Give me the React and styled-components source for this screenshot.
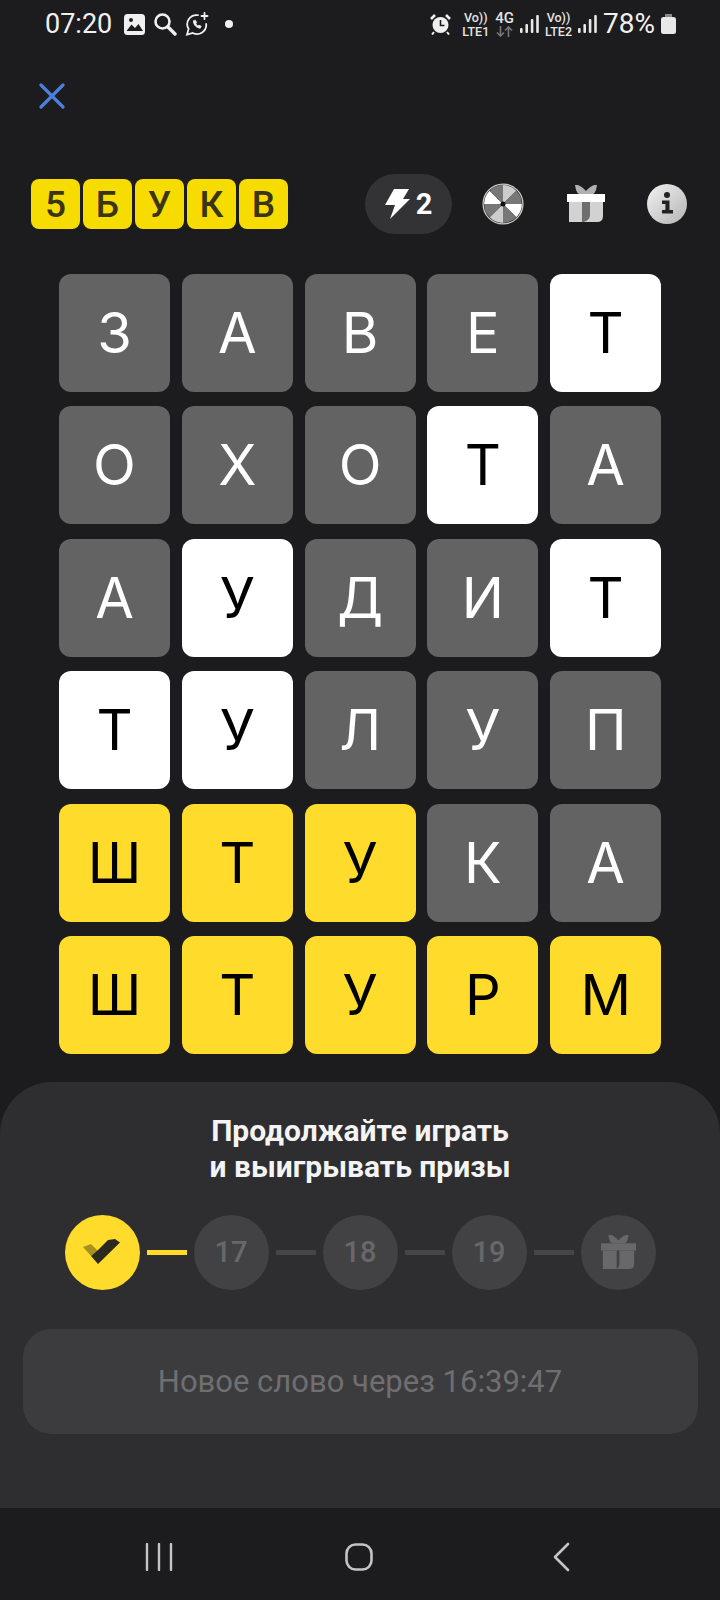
import React from 'react';
import styled, {createGlobalStyle} from 'styled-components';

const GlobalStyle = createGlobalStyle`
html, body {
margin: 0;
padding: 0;
background: #1c1c1e;
}
`;

const Page = styled.div`
width: 720px;
height: 1600px;
display: flex;
flex-direction: column;
overflow: hidden;
background: #1c1c1e;
font-family: Roboto, "Noto Sans", sans-serif;
color: #fff;
`;

const StatusBar = styled.div`
height: 48px;
padding: 0 44px 0 45px;
box-sizing: border-box;
display: flex;
align-items: center;
justify-content: space-between;
color: #f0f0f0;
`;

const StatusGroup = styled.div`
display: flex;
align-items: center;
gap: ${({gap}) => gap || 6}px;
`;

const StatusText = styled.span`
font-size: ${({size}) => size || 27}px;
line-height: 30px;
margin-right: ${({after}) => after || 0}px;
`;

const StatusDot = styled.span`
width: 8px;
height: 8px;
border-radius: 50%;
background: #f0f0f0;
margin-left: 8px;
`;

const NetLabel = styled.div`
display: flex;
flex-direction: column;
align-items: center;
font-size: 12.5px;
line-height: 13px;
font-weight: 500;
color: #e4e4e4;
`;

const NetTop = styled.span`
font-size: ${({size}) => size || 12.5}px;
line-height: 14px;
`;

const Arrows = styled.svg`
margin-top: 1px;
`;

const CloseRow = styled.div`
height: 92px;
padding: 35px 0 0 39px;
box-sizing: border-box;
`;

const Header = styled.div`
height: 60px;
margin-top: 34px;
padding: 0 33px 0 31px;
display: flex;
align-items: center;
justify-content: space-between;
`;

const Logo = styled.div`
display: flex;
gap: 3px;
`;

const LogoTile = styled.div`
width: 49px;
height: 50px;
border-radius: 8px;
background: #f6dc00;
color: #3a3418;
font-size: 37px;
font-weight: 500;
display: flex;
align-items: center;
justify-content: center;
`;

const Actions = styled.div`
display: flex;
align-items: center;
`;

const EnergyPill = styled.div`
width: 87px;
height: 60px;
border-radius: 30px;
background: #333335;
display: flex;
align-items: center;
justify-content: center;
gap: 6px;
font-size: 29px;
font-weight: 700;
margin-right: 30px;
`;

const ActionGap = styled.span`
width: ${({size}) => size}px;
`;

const Grid = styled.div`
margin: 40px 0 0 59px;
display: grid;
grid-template-columns: repeat(5, 111px);
grid-auto-rows: 118px;
column-gap: 11.8px;
row-gap: 14.4px;
`;

const tileColors = {
    gray: ['#636363', '#fff'],
    white: ['#fff', '#000'],
    yellow: ['#ffdc2b', '#000'],
};

const Tile = styled.div`
border-radius: 12px;
display: flex;
align-items: center;
justify-content: center;
font-family: Inter, Roboto, sans-serif;
font-size: 56px;
font-weight: 400;
background: ${({kind}) => tileColors[kind][0]};
color: ${({kind}) => tileColors[kind][1]};
`;

const Sheet = styled.div`
margin-top: 28px;
flex: 1;
border-radius: 52px 52px 0 0;
background: #2e2e30;
padding-top: 31px;
display: flex;
flex-direction: column;
align-items: center;
`;

const SheetTitle = styled.div`
font-size: 30px;
line-height: 36px;
font-weight: 700;
text-align: center;
color: #f4f4f4;
`;

const Stepper = styled.div`
margin-top: 30px;
display: flex;
align-items: center;
gap: 4px;
`;

const Step = styled.div`
width: 75px;
height: 75px;
border-radius: 50%;
background: ${({done}) => (done ? '#ffdc2b' : '#424244')};
color: #68686a;
font-size: 29px;
font-weight: 500;
display: flex;
align-items: center;
justify-content: center;
`;

const Connector = styled.div`
width: 40px;
height: 5px;
margin: 0 3px;
background: ${({done}) => (done ? '#ffdc2b' : '#454547')};
`;

const Timer = styled.div`
margin-top: 39px;
width: 675px;
height: 105px;
border-radius: 28px;
background: #3c3c3e;
color: #6f6f71;
font-size: 31px;
display: flex;
align-items: center;
justify-content: center;
`;

const NavBar = styled.div`
height: 92px;
padding: 6px 150px 0 145px;
box-sizing: border-box;
background: #1c1c1e;
display: flex;
align-items: center;
justify-content: space-between;
`;

const HomeButton = styled.svg`
margin-right: 8px;
`;

const AlarmIcon = styled.svg`
margin-right: 5px;
`;

const words = [
    ['З', 'gray'], ['А', 'gray'], ['В', 'gray'], ['Е', 'gray'], ['Т', 'white'],
    ['О', 'gray'], ['Х', 'gray'], ['О', 'gray'], ['Т', 'white'], ['А', 'gray'],
    ['А', 'gray'], ['У', 'white'], ['Д', 'gray'], ['И', 'gray'], ['Т', 'white'],
    ['Т', 'white'], ['У', 'white'], ['Л', 'gray'], ['У', 'gray'], ['П', 'gray'],
    ['Ш', 'yellow'], ['Т', 'yellow'], ['У', 'yellow'], ['К', 'gray'], ['А', 'gray'],
    ['Ш', 'yellow'], ['Т', 'yellow'], ['У', 'yellow'], ['Р', 'yellow'], ['М', 'yellow'],
];

const Signal = () => (
    <svg width="19" height="20" viewBox="0 0 19 20" fill="#e8e8e8">
        <rect x="0" y="14" width="2.6" height="5" rx="1"/>
        <rect x="5.4" y="10" width="2.6" height="9" rx="1"/>
        <rect x="10.8" y="5" width="2.6" height="14" rx="1"/>
        <rect x="16.2" y="1" width="2.6" height="18" rx="1"/>
    </svg>
);

const Wheel = () => {
    const colors = ['#ccc', '#777', '#fff', '#777', '#ccc', '#777', '#fff', '#777'];
    const point = (deg) => {
        const rad = (deg - 90) * Math.PI / 180;
        return `${20 + 18 * Math.cos(rad)} ${20 + 18 * Math.sin(rad)}`;
    };
    return (
        <svg width="42" height="42" viewBox="0 0 40 40">
            {colors.map((color, index) => (
                <path key={index} fill={color}
                      d={`M20 20L${point(index * 45)}A18 18 0 0 1 ${point(index * 45 + 45)}Z`}/>
            ))}
            <circle cx="20" cy="20" r="19" fill="none" stroke="#ccc" strokeWidth="1.2"/>
            <circle cx="20" cy="20" r="2.4" fill="#111"/>
        </svg>
    );
};

const Gift = ({body = '#d2d2d2', top = '#fff', bow = '#b0b0b0', stripe = '#6e6e6e', narrow, size = 38}) => (
    <svg width={size} height={size} viewBox="0 0 38 38">
        <path fill={bow} d="M8 0q5-1 11 6q6-7 11-6l-1 5q-1 3-3 4H12q-2-1-3-4z"/>
        <rect x="0" y="9" width="38" height="8" fill={top}/>
        <path fill={body} d="M2 17h34v14q0 6-6 6H2z"/>
        {narrow
            ? <path fill={stripe} d="M17 17h3v14q-1 5-3 6z"/>
            : <path fill={stripe} d="M15 17h8v14q-1 5-7 6h-1z"/>}
    </svg>
);

const App = () => (
    <Page>
        <GlobalStyle/>
        <StatusBar>
            <StatusGroup gap={8}>
                <StatusText after={4}>07:20</StatusText>
                <svg width="21" height="21" viewBox="0 0 21 21">
                    <rect width="21" height="21" rx="3.5" fill="#f0f0f0"/>
                    <path d="M2.5 17l5-6.5 3.5 3.5 3.5-4 4.5 7z" fill="#1c1c1e"/>
                    <circle cx="7" cy="6" r="2" fill="#1c1c1e"/>
                </svg>
                <svg width="24" height="24" viewBox="0 0 24 24" fill="none" stroke="#f0f0f0" strokeLinecap="round">
                    <circle cx="9.5" cy="9.5" r="7" strokeWidth="2.6"/>
                    <path d="M15 15l7 7" strokeWidth="3.4"/>
                </svg>
                <svg width="24" height="24" viewBox="0 0 24 24" fill="none" stroke="#f0f0f0" strokeWidth="1.8" strokeLinecap="round">
                    <path d="M13 3.2A9.2 9.2 0 0 0 3.6 17L2 22.6l5.8-1.6A9.2 9.2 0 0 0 21.2 12"/>
                    <path d="M8.4 9c0 4 3 6.8 6.8 7.2l1-2-2.2-1-1 .8c-1-.5-1.8-1.3-2.2-2.3l.8-1-1-2.2z" fill="#f0f0f0" strokeWidth="0.8"/>
                    <path d="M19.5 1v6M16.5 4h6"/>
                </svg>
                <StatusDot/>
            </StatusGroup>
            <StatusGroup>
                <AlarmIcon width="21" height="21" viewBox="0 0 21 21">
                    <circle cx="10.5" cy="11" r="8" fill="#f0f0f0"/>
                    <path d="M10.5 6v5.5h4" fill="none" stroke="#1c1c1e" strokeWidth="1.6"/>
                    <path d="M1 5l4-4M20 5l-4-4" stroke="#f0f0f0" strokeWidth="2.6"/>
                    <path d="M4 18l-2 2.5M17 18l2 2.5" stroke="#f0f0f0" strokeWidth="2"/>
                </AlarmIcon>
                <NetLabel><NetTop>Vo))</NetTop><span>LTE1</span></NetLabel>
                <NetLabel>
                    <NetTop size={15}>4G</NetTop>
                    <Arrows width="17" height="11" viewBox="0 0 17 11" fill="none" stroke="#777" strokeWidth="1.6">
                        <path d="M4.5 0v10M1 6.5l3.5 3.5L8 6.5M12.5 11V1M9 4.5L12.5 1 16 4.5"/>
                    </Arrows>
                </NetLabel>
                <Signal/>
                <NetLabel><NetTop>Vo))</NetTop><span>LTE2</span></NetLabel>
                <Signal/>
                <StatusText size={28}>78%</StatusText>
                <svg width="15" height="20" viewBox="0 0 15 20">
                    <rect x="4" y="0" width="7" height="3" fill="#888"/>
                    <rect x="0" y="3" width="15" height="17" rx="2.5" fill="#e8e8e8"/>
                </svg>
            </StatusGroup>
        </StatusBar>

        <CloseRow>
            <svg width="26" height="26" viewBox="0 0 26 26" fill="none" stroke="#4a80dc" strokeWidth="3.2" strokeLinecap="round">
                <path d="M2 2l22 22M24 2L2 24"/>
            </svg>
        </CloseRow>

        <Header>
            <Logo>
                {['5', 'Б', 'У', 'К', 'В'].map((letter) => <LogoTile key={letter}>{letter}</LogoTile>)}
            </Logo>
            <Actions>
                <EnergyPill>
                    <svg width="25" height="30" viewBox="0 0 25 30" fill="#fff">
                        <path d="M9 0h15l-6 10h7L5 30l5-14H0z"/>
                    </svg>
                    2
                </EnergyPill>
                <Wheel/>
                <ActionGap size={43}/>
                <Gift/>
                <ActionGap size={42}/>
                <svg width="40" height="40" viewBox="0 0 40 40">
                    <defs>
                        <linearGradient id="info" x1="0" y1="0" x2="1" y2="1">
                            <stop offset="0" stopColor="#f2f2f2"/>
                            <stop offset="1" stopColor="#b4b4b4"/>
                        </linearGradient>
                    </defs>
                    <circle cx="20" cy="20" r="20" fill="url(#info)"/>
                    <circle cx="20" cy="11" r="3" fill="#222"/>
                    <path d="M15 16.5h7.5V26H26v3.5H15V26h3.4v-6H15z" fill="#222"/>
                </svg>
            </Actions>
        </Header>

        <Grid>
            {words.map(([letter, kind], index) => <Tile key={index} kind={kind}>{letter}</Tile>)}
        </Grid>

        <Sheet>
            <SheetTitle>Продолжайте играть<br/>и выигрывать призы</SheetTitle>
            <Stepper>
                <Step done>
                    <svg width="38" height="26" viewBox="0 0 38 26">
                        <path d="M0 8l8-3 7 7-7 5z" fill="#a8921f"/>
                        <path d="M15 25L8 17l6-5L25 1l7-1 5 3.5z" fill="#2c2a20"/>
                    </svg>
                </Step>
                <Connector done/>
                <Step>17</Step>
                <Connector/>
                <Step>18</Step>
                <Connector/>
                <Step>19</Step>
                <Connector/>
                <Step>
                    <Gift size={35} body="#68686a" top="#68686a" bow="#68686a" stripe="#424244" narrow/>
                </Step>
            </Stepper>
            <Timer>Новое слово через 16:39:47</Timer>
        </Sheet>

        <NavBar>
            <svg width="28" height="28" viewBox="0 0 28 28" stroke="#c4c4c4" strokeWidth="2.4" strokeLinecap="round">
                <path d="M2 1v26M14 1v26M26 1v26"/>
            </svg>
            <HomeButton width="28" height="28" viewBox="0 0 28 28" fill="none" stroke="#c4c4c4" strokeWidth="2.6">
                <rect x="1.5" y="1.5" width="25" height="25" rx="9"/>
            </HomeButton>
            <svg width="17" height="30" viewBox="0 0 17 30" fill="none" stroke="#c4c4c4" strokeWidth="2.6" strokeLinecap="round" strokeLinejoin="round">
                <path d="M15 2L2 15l13 13"/>
            </svg>
        </NavBar>
    </Page>
);

export default App;
